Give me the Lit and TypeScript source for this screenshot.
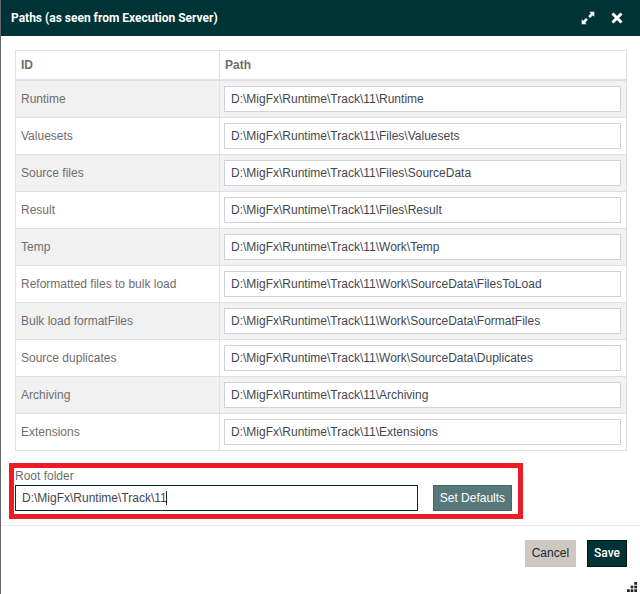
import { LitElement, html, css, svg } from "lit";
import { customElement, state } from "lit/decorators.js";

interface PathRow {
  id: string;
  path: string;
}

const ROOT = "D:\\MigFx\\Runtime\\Track\\11";

@customElement("app-root")
export class AppRoot extends LitElement {
  @state() private rows: PathRow[] = [
    { id: "Runtime", path: ROOT + "\\Runtime" },
    { id: "Valuesets", path: ROOT + "\\Files\\Valuesets" },
    { id: "Source files", path: ROOT + "\\Files\\SourceData" },
    { id: "Result", path: ROOT + "\\Files\\Result" },
    { id: "Temp", path: ROOT + "\\Work\\Temp" },
    { id: "Reformatted files to bulk load", path: ROOT + "\\Work\\SourceData\\FilesToLoad" },
    { id: "Bulk load formatFiles", path: ROOT + "\\Work\\SourceData\\FormatFiles" },
    { id: "Source duplicates", path: ROOT + "\\Work\\SourceData\\Duplicates" },
    { id: "Archiving", path: ROOT + "\\Archiving" },
    { id: "Extensions", path: ROOT + "\\Extensions" },
  ];

  static styles = css`
    :host {
      display: block;
      font: 12px/16px "Liberation Sans", Arial, sans-serif;
      color: #6e6e6e;
    }
    * {
      box-sizing: border-box;
    }
    .dialog {
      position: relative;
      display: flex;
      flex-direction: column;
      min-height: 100vh;
      background: #fff;
      border-left: 1px solid #66676a;
    }
    .title-bar {
      display: flex;
      align-items: center;
      height: 36px;
      padding: 0 16px 0 10px;
      background: #003335;
      color: #fff;
    }
    h1 {
      flex: 1;
      margin: 0;
      font: bold 12px/16px Roboto, "Liberation Sans", sans-serif;
    }
    .icon-button {
      display: block;
      width: 14px;
      height: 14px;
      margin-left: 15px;
      padding: 0;
      border: 0;
      background: none;
      color: inherit;
    }
    svg {
      display: block;
    }
    .content {
      padding: 14px 13px 6px 14px;
    }
    table {
      width: 100%;
      border-collapse: separate;
      border-spacing: 0;
      table-layout: fixed;
      border: 1px solid #dee0e4;
      border-bottom: 0;
    }
    .id-column {
      width: 203px;
    }
    th,
    td {
      padding: 5px;
      text-align: left;
      border-bottom: 1px solid #dee0e4;
    }
    th {
      height: 30px;
      padding: 0 5px;
      border-bottom-width: 2px;
    }
    .path-cell {
      padding-left: 4px;
      border-left: 1px solid #dee0e4;
    }
    th.path-cell {
      padding-left: 5px;
    }
    tbody tr:nth-child(odd) {
      background: #f1f1f1;
    }
    input {
      display: block;
      width: 100%;
      height: 26px;
      padding: 0 6px;
      font: inherit;
      color: #43474e;
      background: #fff;
      border: 1px solid #ced2d9;
      border-radius: 0;
      outline: 0;
    }
    .root-panel {
      display: flex;
      align-items: flex-end;
      gap: 15px;
      width: 84%;
      margin: 12px 0 0 -6px;
      padding: 0 6px 3px 1px;
      border: 5px solid #ed1c24;
    }
    .root-field {
      flex: 1;
    }
    .root-field label {
      display: block;
      height: 17px;
    }
    .entry {
      position: relative;
    }
    .entry input {
      border-color: #003335;
    }
    .caret {
      position: absolute;
      left: 151px;
      top: 6px;
      width: 1px;
      height: 14px;
      background: #222;
    }
    .button {
      height: 27px;
      padding: 0 6px 2px;
      border: 1px solid;
      font: inherit;
      white-space: nowrap;
    }
    .defaults {
      height: 26px;
      padding-bottom: 0;
      color: #fff;
      background: #56787a;
      border-color: #4b6466;
    }
    .footer {
      display: flex;
      justify-content: flex-end;
      gap: 11px;
      padding: 14px 13px 0;
      border-top: 1px solid #e7e9eb;
    }
    .cancel {
      color: #212529;
      background: #cdc8c2;
      border-color: #cdc8c2;
    }
    .save {
      font-family: Roboto, "Liberation Sans", sans-serif;
      font-weight: 500;
      color: #fff;
      background: #003335;
      border-color: #001416;
    }
    .grip {
      position: absolute;
      right: 3px;
      bottom: 2px;
    }
  `;

  render() {
    return html`
      <div class="dialog" role="dialog" aria-labelledby="title">
        <header class="title-bar">
          <h1 id="title">Paths (as seen from Execution Server)</h1>
          <button class="icon-button" aria-label="Maximize">
            <svg width="14" height="14" viewBox="0 0 14 14" fill="currentColor">
              <path d="M8.300 .7h5v5l-1.500-1.500L9 7 7.200 5.200 9.800 2.200zM5.700 13.300h-5v-5l1.500 1.500L5 7l1.800 1.800-2.600 3z" />
            </svg>
          </button>
          <button class="icon-button" aria-label="Close">
            <svg width="14" height="14" viewBox="0 0 14 14" fill="none" stroke="currentColor" stroke-width="3">
              <path d="M2.500 2.500l9 9M11.500 2.500l-9 9" />
            </svg>
          </button>
        </header>
        <main class="content">
          <table>
            <thead>
              <tr>
                <th class="id-column">ID</th>
                <th class="path-cell">Path</th>
              </tr>
            </thead>
            <tbody>
              ${this.rows.map(
                (row, i) => html`
                  <tr>
                    <td><label for="path-${i}">${row.id}</label></td>
                    <td class="path-cell"><input id="path-${i}" type="text" .value=${row.path} /></td>
                  </tr>
                `
              )}
            </tbody>
          </table>
          <section class="root-panel">
            <div class="root-field">
              <label for="root">Root folder</label>
              <div class="entry">
                <input id="root" type="text" .value=${ROOT} />
                <span class="caret"></span>
              </div>
            </div>
            <button class="button defaults">Set Defaults</button>
          </section>
        </main>
        <footer class="footer">
          <button class="button cancel">Cancel</button>
          <button class="button save">Save</button>
        </footer>
        <svg class="grip" width="10" height="10" viewBox="0 0 11 11" fill="#222" aria-hidden="true">
          ${[[8, 0], [4, 4], [8, 4], [0, 8], [4, 8], [8, 8]].map(
            ([x, y]) => svg`<rect x=${x} y=${y} width="3" height="3" />`
          )}
        </svg>
      </div>
    `;
  }
}
